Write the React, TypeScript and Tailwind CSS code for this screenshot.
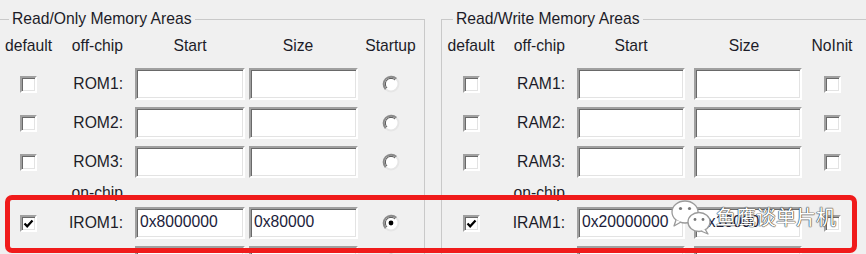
import React from "react";

const font = { fontFamily: '"Liberation Sans", Arial, sans-serif' };

function Sunken({ className = "", children }: { className?: string; children?: React.ReactNode }) {
  return (
    <div
      className={
        "bg-white border-2 border-t-[#a0a0a0] border-l-[#a0a0a0] border-r-white border-b-white shadow-[inset_1px_1px_0_#696969,inset_-1px_-1px_0_#e3e3e3] " +
        className
      }
    >
      {children}
    </div>
  );
}

function Check({ checked = false }: { checked?: boolean }) {
  return (
    <Sunken className="w-[17px] h-[17px] flex items-center justify-center">
      {checked && (
        <svg width="11" height="11" viewBox="0 0 11 11">
          <path d="M1.5 5.5 L4.2 8.3 L9.5 2.5" fill="none" stroke="#000" strokeWidth="2.2" />
        </svg>
      )}
    </Sunken>
  );
}

function Radio({ checked = false }: { checked?: boolean }) {
  return (
    <svg width="18" height="18" viewBox="0 0 18 18">
      <circle cx="9" cy="9" r="7.5" fill="#fff" stroke="#e6e6e6" strokeWidth="2" />
      <path d="M3.7 14.3 A7.5 7.5 0 0 1 14.3 3.7" fill="none" stroke="#8a8a8a" strokeWidth="2" />
      <path d="M5 13 A5.6 5.6 0 0 1 13 5" fill="none" stroke="#555" strokeWidth="1" />
      {checked && <circle cx="9" cy="9" r="2.4" fill="#000" />}
    </svg>
  );
}

function Field({ w, ml, value = "" }: { w: string; ml: string; value?: string }) {
  return (
    <Sunken className={`${w} ${ml} h-[32px] pl-[3px] pt-[4px] text-[15.7px] leading-[18px] text-[#1c1c3a] overflow-hidden whitespace-nowrap`}>
      {value}
    </Sunken>
  );
}

type Row = { key: string; label: string; def: boolean; start: string; size: string; last: boolean };

function Group({
  title,
  lastHeader,
  rows,
  rowsOn,
  side,
}: {
  title: string;
  lastHeader: string;
  rows: Row[];
  rowsOn: Row[];
  side: "ro" | "rw";
}) {
  const ro = side === "ro";
  const c1 = ro ? "w-[61px]" : "w-[58px]";
  const c2 = ro ? "w-[64px]" : "w-[65px]";
  const i1w = ro ? "w-[110px]" : "w-[108px]";
  const i2w = ro ? "w-[109px]" : "w-[108px]";
  const i2ml = ro ? "ml-[4px]" : "ml-[9px]";
  const cl = ro ? "w-[65px]" : "w-[60px]";

  const renderRow = (r: Row) => (
    <div key={r.key} className="flex items-center h-[32px] shrink-0">
      <div className={`${c1} flex justify-center`}>
        <Check checked={r.def} />
      </div>
      <div className={`${c2} text-right`}>{r.label}</div>
      <Field w={i1w} ml="ml-[12px]" value={r.start} />
      <Field w={i2w} ml={i2ml} value={r.size} />
      <div className={`${cl} flex justify-center`}>
        {ro ? <Radio checked={r.last} /> : <Check checked={r.last} />}
      </div>
    </div>
  );

  return (
    <fieldset
      className={`${ro ? "-ml-[3px] w-[428px]" : "ml-[16px] w-[430px]"} shrink-0 h-[320px] border border-[#c9c9c9] p-0 m-0`}
    >
      <legend className="ml-[11px] px-[3px] leading-[20px]">{title}</legend>
      <div className="flex flex-col">
        <div className="flex items-center h-[20px] mt-[7px]">
          <div className={`${c1} text-center`}>default</div>
          <div className={`${c2} text-right`}>off-chip</div>
          <div className={`${i1w} ml-[12px] text-center`}>Start</div>
          <div className={`${i2w} ${i2ml} text-center ${ro ? "pr-[11px]" : "pr-[8px]"}`}>Size</div>
          <div className={`${cl} text-center`}>{lastHeader}</div>
        </div>
        <div className="flex flex-col gap-[7px] mt-[12px]">
          {rows.map(renderRow)}
          <div className="flex items-center h-[15px]">
            <div className={c1} />
            <div className={`${c2} text-right`}>on-chip</div>
          </div>
          {rowsOn.map(renderRow)}
        </div>
      </div>
    </fieldset>
  );
}

function WeChat() {
  return (
    <svg width="44" height="38" viewBox="0 0 44 38">
      <ellipse cx="15" cy="14" rx="13" ry="11" fill="#fff" stroke="#9a9a9a" strokeWidth="1.3" />
      <path d="M6 22 L4 28 L11 24" fill="#fff" stroke="#9a9a9a" strokeWidth="1.3" strokeLinejoin="round" />
      <circle cx="10.5" cy="10.5" r="1.6" fill="#777" />
      <circle cx="19.5" cy="10.5" r="1.6" fill="#777" />
      <ellipse cx="29" cy="24" rx="11" ry="9.5" fill="#fff" stroke="#9a9a9a" strokeWidth="1.3" />
      <path d="M35 31 L38 36 L31 33" fill="#fff" stroke="#9a9a9a" strokeWidth="1.3" strokeLinejoin="round" />
      <circle cx="25" cy="21.5" r="1.4" fill="#777" />
      <circle cx="33" cy="21.5" r="1.4" fill="#777" />
    </svg>
  );
}

export default function App() {
  return (
    <div
      className="relative w-[866px] h-[254px] overflow-hidden bg-[#f0f0f0] text-[15.7px] text-[#1c1c28] flex pt-[9px]"
      style={font}
    >
      <Group
        side="ro"
        title="Read/Only Memory Areas"
        lastHeader="Startup"
        rows={[
          { key: "r1", label: "ROM1:", def: false, start: "", size: "", last: false },
          { key: "r2", label: "ROM2:", def: false, start: "", size: "", last: false },
          { key: "r3", label: "ROM3:", def: false, start: "", size: "", last: false },
        ]}
        rowsOn={[
          { key: "i1", label: "IROM1:", def: true, start: "0x8000000", size: "0x80000", last: true },
          { key: "i2", label: "", def: false, start: "", size: "", last: false },
        ]}
      />
      <Group
        side="rw"
        title="Read/Write Memory Areas"
        lastHeader="NoInit"
        rows={[
          { key: "r1", label: "RAM1:", def: false, start: "", size: "", last: false },
          { key: "r2", label: "RAM2:", def: false, start: "", size: "", last: false },
          { key: "r3", label: "RAM3:", def: false, start: "", size: "", last: false },
        ]}
        rowsOn={[
          { key: "i1", label: "IRAM1:", def: true, start: "0x20000000", size: "0x10000", last: false },
          { key: "i2", label: "", def: false, start: "", size: "", last: false },
        ]}
      />

      <div className="absolute left-[5px] top-[195px] w-[852px] h-[58px] border-[5px] border-[#f01b1b] rounded-[7px]" />

      <div className="absolute left-[670px] top-[198px] flex items-center">
        <WeChat />
        <span
          className="ml-[2px] text-[20px] leading-[28px] text-white [text-shadow:0_0_1px_#333,0_0_1px_#333,0_0_1px_#333]"
          style={{ fontFamily: '"Noto Sans CJK SC", sans-serif' }}
        >
          鱼鹰谈单片机
        </span>
      </div>
    </div>
  );
}
